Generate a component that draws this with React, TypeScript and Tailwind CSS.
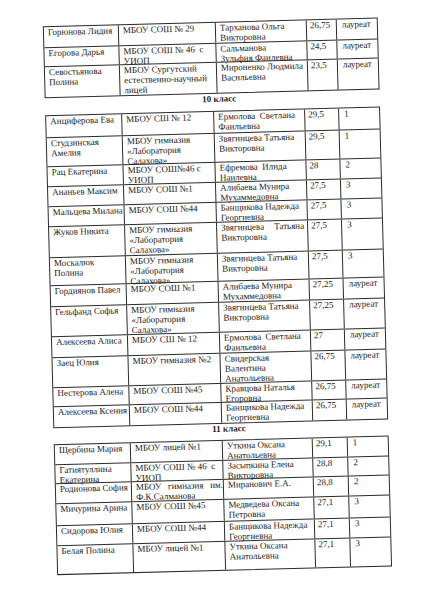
import React from "react";

type Row = { h: string; c: string[][] };

const line = "border-[#2b2b2b]";

const pads = ["pl-[4px]", "pl-[4px]", "pl-[4px] pr-[3px]", "pl-[3px]", "pl-[5px]"];

const t1cols = ["w-[75px]", "w-[97px]", "w-[91px]", "w-[30px]", "w-[42px]"];
const t2cols = ["w-[76px]", "w-[92px]", "w-[91px]", "w-[34px]", "w-[42px]"];
const t3cols = ["w-[76px]", "w-[92px]", "w-[90px]", "w-[35px]", "w-[42px]"];

const S2 = "\u00a0\u00a0";

const grade9: Row[] = [
  { h: "h-[21px]", c: [["Горюнова Лидия"], ["МБОУ СОШ № 29"], ["Тарханова Ольга", "Викторовна"], ["26,75"], ["лауреат"]] },
  { h: "h-[19px]", c: [["Егорова Дарья"], ["МБОУ СОШ № 46" + S2 + "с", "УИОП"], ["Сальманова", "Зульфия Фаилевна"], ["24,5"], ["лауреат"]] },
  { h: "h-[30px]", c: [["Севостьянова", "Полина"], ["МБОУ Сургутский", "естественно-научный", "лицей"], ["Мироненко Людмила", "Васильевна"], ["23,5"], ["лауреат"]] },
];

const gym = ["МБОУ гимназия", "«Лаборатория", "Салахова»"];

const grade10: Row[] = [
  { h: "h-[22px]", c: [["Анциферова Ева"], ["МБОУ СШ № 12"], ["Ермолова" + S2 + "Светлана", "Фаильевна"], ["29,5"], ["1"]] },
  { h: "h-[29px]", c: [["Студзинская", "Амелия"], gym, ["Звягинцева Татьяна", "Викторовна"], ["29,5"], ["1"]] },
  { h: "h-[20px]", c: [["Рац Екатерина"], ["МБОУ СОШ№46 с", "УИОП"], ["Ефремова" + S2 + "Илида", "Наилевна"], ["28"], ["2"]] },
  { h: "h-[20px]", c: [["Ананьев Максим"], ["МБОУ СОШ №1"], ["Алибаева Мунира", "Мухаммедовна"], ["27,5"], ["3"]] },
  { h: "h-[20px]", c: [["Мальцева Милана"], ["МБОУ СОШ №44"], ["Банщикова Надежда", "Георгиевна"], ["27,5"], ["3"]] },
  { h: "h-[31px]", c: [["Жуков Никита"], gym, ["Звягинцева|Татьяна", "Викторовна"], ["27,5"], ["3"]] },
  { h: "h-[28px]", c: [["Москалюк", "Полина"], gym, ["Звягинцева Татьяна", "Викторовна"], ["27,5"], ["3"]] },
  { h: "h-[21px]", c: [["Гордиянов Павел"], ["МБОУ СОШ №1"], ["Алибаева Мунира", "Мухаммедовна"], ["27,25"], ["лауреат"]] },
  { h: "h-[30px]", c: [["Гельфанд Софья"], gym, ["Звягинцева Татьяна", "Викторовна"], ["27,25"], ["лауреат"]] },
  { h: "h-[21px]", c: [["Алексеева Алиса"], ["МБОУ СШ № 12"], ["Ермолова" + S2 + "Светлана", "Фаильевна"], ["27"], ["лауреат"]] },
  { h: "h-[30px]", c: [["Заец Юлия"], ["МБОУ гимназия №2"], ["Свидерская", "Валентина", "Анатольевна"], ["26,75"], ["лауреат"]] },
  { h: "h-[19px]", c: [["Нестерова Алена"], ["МБОУ СОШ №45"], ["Кравцова Наталья", "Егоровна"], ["26,75"], ["лауреат"]] },
  { h: "h-[20px]", c: [["Алексеева Ксения"], ["МБОУ СОШ №44"], ["Банщикова Надежда", "Георгиевна"], ["26,75"], ["лауреат"]] },
];

const grade11: Row[] = [
  { h: "h-[20px]", c: [["Щербина Мария"], ["МБОУ лицей №1"], ["Уткина Оксана", "Анатольевна"], ["29,1"], ["1"]] },
  { h: "h-[19px]", c: [["Гатиятуллина", "Екатерина"], ["МБОУ СОШ № 46" + S2 + "с", "УИОП"], ["Засыпкина Елена", "Викторовна"], ["28,8"], ["2"]] },
  { h: "h-[20px]", c: [["Родионова София"], ["МБОУ|гимназия|им.", "Ф.К.Салманова"], ["Миранович Е.А."], ["28,8"], ["2"]] },
  { h: "h-[22px]", c: [["Мичурина Арина"], ["МБОУ СОШ №45"], ["Медведева Оксана", "Петровна"], ["27,1"], ["3"]] },
  { h: "h-[20px]", c: [["Сидорова Юлия"], ["МБОУ СОШ №44"], ["Банщикова Надежда", "Георгиевна"], ["27,1"], ["3"]] },
  { h: "h-[28px]", c: [["Белая Полина"], ["МБОУ лицей №1"], ["Уткина Оксана", "Анатольевна"], ["27,1"], ["3"]] },
];

const Line = ({ text }: { text: string }) =>
  text.includes("|") ? (
    <div className="flex justify-between">
      {text.split("|").map((w, i) => (
        <span key={i}>{w}</span>
      ))}
    </div>
  ) : (
    <div className="whitespace-nowrap">{text}</div>
  );

const Table = ({ rows, cols }: { rows: Row[]; cols: string[] }) => (
  <div className={`w-[335px] border ${line}`}>
    {rows.map((r, i) => (
      <div key={i} className={`flex ${r.h} ${i < rows.length - 1 ? `border-b ${line}` : ""}`}>
        {r.c.map((lines, j) => (
          <div
            key={j}
            className={`shrink-0 ${cols[j]} ${pads[j]} ${j < 4 ? `border-r ${line}` : ""}`}
          >
            {lines.map((t, k) => (
              <Line key={k} text={t} />
            ))}
          </div>
        ))}
      </div>
    ))}
  </div>
);

export default function App() {
  return (
    <div className="w-[424px] h-[599px] overflow-hidden bg-white">
      <div
        className="w-[424px] h-[599px] -rotate-[1.5deg] pt-[22px] pl-[50px] text-[9px] leading-[10px] text-[#1c1c1c]"
        style={{ fontFamily: '"Liberation Serif", "Times New Roman", serif' }}
      >
        <Table rows={grade9} cols={t1cols} />
        <div className="w-[335px] pl-[14px] text-center font-bold text-[9px] leading-[10px] mb-[7px]">
          10 класс
        </div>
        <Table rows={grade10} cols={t2cols} />
        <div className="w-[335px] pl-[16px] text-center font-bold text-[9px] leading-[10px] mb-[6px]">
          11 класс
        </div>
        <Table rows={grade11} cols={t3cols} />
      </div>
    </div>
  );
}
